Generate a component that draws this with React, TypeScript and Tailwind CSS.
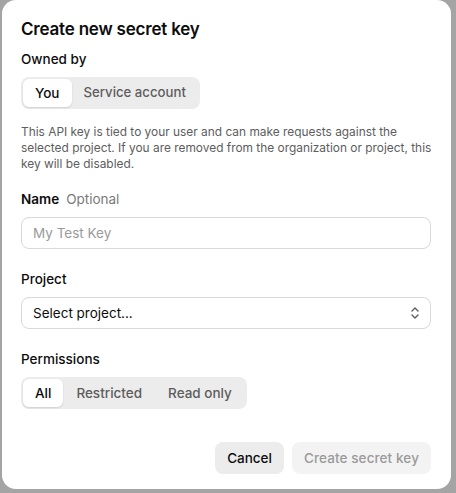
import React from "react";

export default function App() {
  return (
    <div className="h-[493px] w-[456px] bg-[#a4a4a4] overflow-hidden" style={{ fontFamily: "Inter, 'Noto Sans', sans-serif" }}>
      <div className="ml-[2px] h-[489px] w-[449px] rounded-[14px] bg-white pl-[19px] pr-[20px] pt-[15px] text-[#0d0d0d]">
        <div className="text-[17px] font-semibold leading-[28px] tracking-[-0.2px]">Create new secret key</div>
        <div className="mt-[6px] text-[13.5px] font-medium leading-[20px]">Owned by</div>
        <div className="mt-[8px] inline-flex h-[32px] items-center rounded-[8px] bg-[#ececec] p-[2px] text-[13.5px]">
          <div className="flex h-full items-center rounded-[6px] bg-white px-[12px] font-medium shadow-[0_1px_2px_rgba(0,0,0,0.12)]">You</div>
          <div className="flex h-full items-center px-[12px] text-[13.2px] font-medium text-[#5d5d5d]">Service account</div>
        </div>
        <p className="mt-[15px] whitespace-nowrap text-[11.9px] leading-[16px] text-[#5d5d5d]">
          <span className="block">This API key is tied to your user and can make requests against the</span>
          <span className="block">selected project. If you are removed from the organization or project, this</span>
          <span className="block">key will be disabled.</span>
        </p>
        <div className="mt-[17px] flex items-center gap-[7px] text-[13.5px] leading-[20px]">
          <span className="font-semibold">Name</span>
          <span className="text-[#7a7a7a]">Optional</span>
        </div>
        <div className="mt-[8px] flex h-[32px] items-center rounded-[8px] border border-[#d9d9d9] px-[11px] text-[13.5px] text-[#9a9a9a]">
          My Test Key
        </div>
        <div className="mt-[20px] text-[13.5px] font-medium leading-[20px]">Project</div>
        <div className="mt-[8px] flex h-[32px] items-center justify-between rounded-[8px] border border-[#d9d9d9] pl-[11px] pr-[10px] text-[13.5px]">
          <span>Select project...</span>
          <svg width="10" height="14" viewBox="0 0 10 14" fill="none" stroke="#5d5d5d" strokeWidth="1.4" strokeLinecap="round" strokeLinejoin="round">
            <path d="M2 5 L5 2 L8 5" />
            <path d="M2 9 L5 12 L8 9" />
          </svg>
        </div>
        <div className="mt-[20px] text-[13.5px] font-medium leading-[20px]">Permissions</div>
        <div className="mt-[8px] inline-flex h-[32px] items-center rounded-[8px] bg-[#ececec] p-[2px] text-[13.5px]">
          <div className="flex h-full items-center rounded-[6px] bg-white px-[12px] font-medium shadow-[0_1px_2px_rgba(0,0,0,0.12)]">All</div>
          <div className="flex h-full items-center px-[13px] font-medium text-[#5d5d5d]">Restricted</div>
          <div className="flex h-full items-center px-[13px] font-medium text-[#5d5d5d]">Read only</div>
        </div>
        <div className="mt-[33px] flex justify-end gap-[8px] text-[13.5px]">
          <div className="flex h-[32px] items-center rounded-[8px] bg-[#ececec] px-[12px] font-medium">Cancel</div>
          <div className="flex h-[32px] items-center rounded-[8px] bg-[#f3f3f3] px-[12px] font-medium tracking-[0.1px] text-[#9a9a9a]">Create secret key</div>
        </div>
      </div>
    </div>
  );
}
